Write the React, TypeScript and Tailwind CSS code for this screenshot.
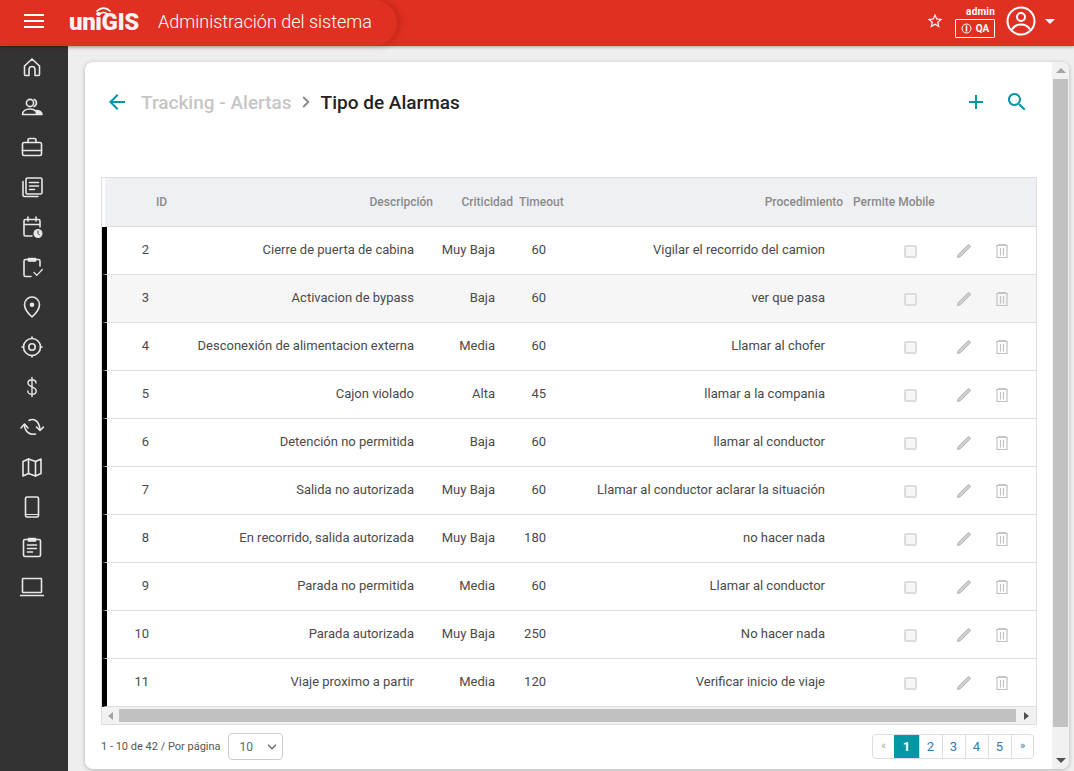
import { ChevronDown, ChevronRight } from 'lucide-react';
import type { ReactNode } from 'react';

const rows = [
    { id: 2, desc: 'Cierre de puerta de cabina', crit: 'Muy Baja', timeout: 60, proc: 'Vigilar el recorrido del camion' },
    { id: 3, desc: 'Activacion de bypass', crit: 'Baja', timeout: 60, proc: 'ver que pasa' },
    { id: 4, desc: 'Desconexión de alimentacion externa', crit: 'Media', timeout: 60, proc: 'Llamar al chofer' },
    { id: 5, desc: 'Cajon violado', crit: 'Alta', timeout: 45, proc: 'llamar a la compania' },
    { id: 6, desc: 'Detención no permitida', crit: 'Baja', timeout: 60, proc: 'llamar al conductor' },
    { id: 7, desc: 'Salida no autorizada', crit: 'Muy Baja', timeout: 60, proc: 'Llamar al conductor aclarar la situación' },
    { id: 8, desc: 'En recorrido, salida autorizada', crit: 'Muy Baja', timeout: 180, proc: 'no hacer nada' },
    { id: 9, desc: 'Parada no permitida', crit: 'Media', timeout: 60, proc: 'Llamar al conductor' },
    { id: 10, desc: 'Parada autorizada', crit: 'Muy Baja', timeout: 250, proc: 'No hacer nada' },
    { id: 11, desc: 'Viaje proximo a partir', crit: 'Media', timeout: 120, proc: 'Verificar inicio de viaje' },
];

// sidebar icons, drawn on a 24 box
const sideIcons: ReactNode[] = [
    <path key="home" d="M4.5 11 12 4l7.500 7v8.500a1 1 0 0 1-1 1H15v-6a3 3 0 0 0-6 0v6H5.500a1 1 0 0 1-1-1z" />,
    <g key="users">
        <circle cx="10" cy="8" r="3.600" />
        <path d="M14 4.600a3.600 3.600 0 0 1 0 6.800" />
        <path d="M2.500 19.500c0-3.500 3.500-5.500 7.500-5.500 2.500 0 4.500.8 6 2.200l1 3.300z" />
        <path d="M16.500 15.500c3 0 5.500 1.500 5.500 4h-4.500z" fill="#e8e8e8" />
    </g>,
    <g key="case">
        <rect x="2.500" y="7.500" width="19" height="13" rx="1.500" />
        <path d="M8 7.500V5a1.500 1.500 0 0 1 1.500-1.500h5A1.500 1.500 0 0 1 16 5v2.500M2.500 15.500h19" />
    </g>,
    <g key="news">
        <rect x="6" y="3" width="16" height="16" rx="1.500" />
        <path d="M3 6.500V20a1.500 1.500 0 0 0 1.500 1.500H18M9.500 7.500h9M9.500 11h9M9.500 14.500h5" />
    </g>,
    <g key="cal">
        <path d="M12 21H5.500A1.500 1.500 0 0 1 4 19.500V6a1.500 1.500 0 0 1 1.500-1.500h13A1.500 1.500 0 0 1 20 6v6M4 9.500h16M8 2v4M16 2v4" />
        <circle cx="18" cy="18.500" r="4.500" fill="#e8e8e8" stroke="none" />
        <path d="M18 16v2.500l1.500 1.500" stroke="#333333" strokeWidth="1" />
    </g>,
    <g key="check">
        <path d="M8 4.500H5.500A1.500 1.500 0 0 0 4 6v14a1.500 1.500 0 0 0 1.500 1.500H11M16 4.500h2.500A1.500 1.500 0 0 1 20 6v5" />
        <path d="M8.500 3.500h7v2.500h-7z" fill="#e8e8e8" />
        <path d="m14 17.500 2.800 2.800 5.500-5.800" strokeWidth="1.200" />
    </g>,
    <g key="pin">
        <path d="M12 22s7.500-6.800 7.500-12.500a7.500 7.500 0 0 0-15 0C4.500 15.200 12 22 12 22z" />
        <circle cx="12" cy="9.800" r="1.500" fill="#e8e8e8" />
    </g>,
    <g key="target">
        <circle cx="12" cy="12" r="8.500" />
        <circle cx="12" cy="12" r="3.200" />
        <path d="M12 2v1.500M12 20.500V22M2 12h1.500M20.500 12H22" />
    </g>,
    <path key="dollar" d="M16 8c0-2-1.800-3.300-4-3.300S8 6 8 8s1.800 3 4 3.800 4.200 1.700 4.200 4.200-2 3.300-4.200 3.300S7.800 18 7.800 16M12 2.500v19" strokeWidth="1.400" />,
    <g key="sync">
        <path d="M9 5.500C13 3 19 5 20 14.500" />
        <path d="m16.500 12 3.500 3.500 3.500-3.500" />
        <path d="M4.500 10c0 6 5 10.500 11 9" />
        <path d="M1 13 4.500 9 8 13" />
    </g>,
    <g key="map">
        <path d="M3 6.500 8.500 4l7 2.500L21 4v14.500L15.500 21l-7-2.500L3 21z" />
        <path d="M8.500 4v14.500M15.500 6.500V21" />
    </g>,
    <g key="phone">
        <rect x="5.500" y="2" width="13" height="20" rx="1.500" />
        <path d="M5.500 19.500h13" strokeWidth="1" />
    </g>,
    <g key="list">
        <rect x="3.500" y="4.500" width="17" height="17" rx="1.500" />
        <path d="M8.500 3.500h7V6h-7z" fill="#e8e8e8" />
        <path d="M7.500 10h9M7.500 13.500h9M7.500 17h5" />
    </g>,
    <g key="laptop">
        <rect x="2.500" y="3.500" width="19" height="14" rx="0.500" />
        <path d="M.5 20.500h23" />
    </g>,
];

function SideIcon({ children }: { children: ReactNode }) {
    return (
        <div className="h-10 flex items-center justify-center">
            <svg width="24" height="24" viewBox="0 0 24 24" fill="none" stroke="#e8e8e8" strokeWidth="1.600" strokeLinecap="round" strokeLinejoin="round">
                {children}
            </svg>
        </div>
    );
}

function Logo() {
    return (
        <div className="relative w-[71px] h-[26px] ml-[25px] flex items-end">
            <span className="font-['Roboto',sans-serif] font-black text-[24px] leading-[24px] tracking-[-0.4px] text-white/95">uniGIS</span>
            <svg className="absolute left-[25px] -top-[3px]" width="20" height="12" viewBox="0 0 20 12" fill="none" stroke="white" strokeWidth="1.700" strokeLinecap="round">
                <path d="M3 6a9 9 0 0 1 13 0" />
                <path d="M6 9a5 5 0 0 1 7 0" />
            </svg>
        </div>
    );
}

function TriangleUp({ color = '#a3a3a3' }: { color?: string }) {
    return <div className="w-0 h-0 border-x-[5px] border-x-transparent border-b-[5px]" style={{ borderBottomColor: color }} />;
}

function TriangleDown({ color = '#505050' }: { color?: string }) {
    return <div className="w-0 h-0 border-x-[5px] border-x-transparent border-t-[5px]" style={{ borderTopColor: color }} />;
}

function MaterialIcon({ d, size = 24 }: { d: string; size?: number }) {
    return (
        <svg width={size} height={size} viewBox="0 0 24 24" fill="currentColor" className="shrink-0">
            <path d={d} />
        </svg>
    );
}

function Pencil() {
    return (
        <svg width="16" height="16" viewBox="0 0 16 16" fill="none" stroke="#a9a9a9" strokeWidth="0.900">
            <path d="M1.500 14.500 2.300 11.500 12 1.800a.8.800 0 0 1 1.100 0l1.100 1.100a.8.800 0 0 1 0 1.100L4.500 13.700z" fill="#cfcfcf" />
        </svg>
    );
}

function Trash() {
    return (
        <svg width="14" height="14" viewBox="0 0 14 14" fill="none" stroke="#c2c2c2" strokeWidth="1.200">
            <path d="M1 1.500h12M3 .5h8M2 2v11.500h10V2M5.500 4v7.500M8.500 4v7.500" />
        </svg>
    );
}

function Row({ row, hover }: { row: (typeof rows)[number]; hover: boolean }) {
    return (
        <div className={`flex items-center h-12 border-l-[5px] border-l-black border-b border-b-[#dedede] text-[13px] text-[#4a4a4a] ${hover ? 'bg-[#f6f6f6]' : 'bg-white'}`}>
            <div className="w-[42px] text-right pb-px">{row.id}</div>
            <div className="w-[265px] text-right pb-px whitespace-nowrap">{row.desc}</div>
            <div className="w-[81px] text-right pb-px">{row.crit}</div>
            <div className="w-[51px] text-right pb-px">{row.timeout}</div>
            <div className="w-[279px] text-right pb-px whitespace-nowrap">{row.proc}</div>
            <div className="w-[13px] h-[13px] ml-[79px] mt-px rounded-[2px] border-2 border-[#dcdcdc] bg-[#f6f6f6]" />
            <div className="ml-[39px]"><Pencil /></div>
            <div className="ml-[23px]"><Trash /></div>
        </div>
    );
}

export default function App() {
    const pages = ['1', '2', '3', '4', '5'];

    return (
        <div className="h-[771px] flex flex-col overflow-hidden bg-[#eeeeee] font-['Roboto',sans-serif]">
            {/* Header */}
            <header className="relative z-10 h-[46px] shrink-0 bg-[#e03022] flex items-center shadow-[0_1px_3px_rgba(0,0,0,0.3)]">
                <div className="h-[46px] w-[397px] flex items-center rounded-r-[24px] shadow-[4px_0_6px_rgba(120,20,10,0.25)] pl-[24px] pb-[4px]">
                    <div className="w-[20px] flex flex-col gap-[4px]">
                        <div className="h-[2px] bg-white" />
                        <div className="h-[2px] bg-white" />
                        <div className="h-[2px] bg-white" />
                    </div>
                    <Logo />
                    <span className="ml-[18px] text-[18px] font-light text-white whitespace-nowrap">Administración del sistema</span>
                </div>
                <div className="ml-auto flex items-center pr-[19px] pb-[4px] text-white">
                    <MaterialIcon size={18} d="M22 9.240l-7.190-.620L12 2 9.190 8.630 2 9.240l5.460 4.730L5.820 21 12 17.270 18.180 21l-1.630-7.030L22 9.240zM12 15.400l-3.760 2.270 1-4.280-3.320-2.880 4.380-.380L12 6.100l1.710 4.040 4.380.380-3.320 2.880 1 4.280L12 15.400z" />
                    <div className="ml-[11px] w-[40px] flex flex-col items-end">
                        <span className="text-[10px] font-bold leading-[11px] mb-[2px] tracking-[0.2px] pt-[1px]">admin</span>
                        <div className="w-[40px] h-[19px] border border-white rounded-[1px] flex items-center justify-center gap-[4px] text-[10px] font-bold">
                            <svg width="11" height="11" viewBox="0 0 11 11" fill="none" stroke="white" strokeWidth="1">
                                <circle cx="5.500" cy="5.500" r="4.500" />
                                <path d="M5.500 2.500v6" strokeWidth="1.500" />
                            </svg>
                            QA
                        </div>
                    </div>
                    <svg className="ml-[11px]" width="30" height="30" viewBox="0 0 30 30" fill="none" stroke="white" strokeWidth="2">
                        <circle cx="15" cy="15" r="13.500" />
                        <circle cx="15" cy="11" r="4" />
                        <path d="M6 23.500c2-3.500 5.500-5 9-5s7 1.500 9 5" />
                    </svg>
                    <div className="ml-[9px] w-0 h-0 border-x-[5px] border-x-transparent border-t-[5px] border-t-white" />
                </div>
            </header>

            <div className="flex-1 flex min-h-0">
                {/* Sidebar */}
                <nav className="w-[68px] shrink-0 bg-[#333333] pt-px pr-[4px]">
                    {sideIcons.map((icon, i) => (
                        <SideIcon key={i}>{icon}</SideIcon>
                    ))}
                </nav>

                <main className="flex-1 min-w-0 pt-[16px] pl-[17px] pr-[5px] pb-[2px]">
                    <div className="h-full flex bg-white rounded-[8px] shadow-[0_1px_4px_rgba(0,0,0,0.25)] overflow-hidden">
                        <div className="w-[967px] pl-[16px] pr-[15px]">
                            {/* Title */}
                            <div className="h-[80px] mb-[35px] flex items-center">
                                <div className="text-[#0097a7] ml-[4px]">
                                    <MaterialIcon d="M20 11H7.830l5.590-5.590L12 4l-8 8 8 8 1.410-1.410L7.830 13H20v-2z" />
                                </div>
                                <span className="ml-[12px] mt-[2px] text-[19px] font-medium text-[#c6c6c6] whitespace-nowrap">Tracking - Alertas</span>
                                <ChevronRight size={18} strokeWidth={2.500} className="text-[#8a8a8a] ml-[5px]" />
                                <span className="ml-[6px] mt-[2px] text-[19px] font-medium text-[#222222] whitespace-nowrap">Tipo de Alarmas</span>
                                <div className="text-[#0097a7] ml-auto">
                                    <MaterialIcon d="M19 13h-6v6h-2v-6H5v-2h6V5h2v6h6v2z" />
                                </div>
                                <div className="text-[#0097a7] ml-[17px] mr-[8px]">
                                    <MaterialIcon d="M15.500 14h-.790l-.280-.270C15.410 12.590 16 11.110 16 9.500 16 5.910 13.090 3 9.500 3S3 5.910 3 9.500 5.910 16 9.500 16c1.610 0 3.090-.590 4.230-1.570l.270.280v.790l5 4.990L20.490 19l-4.990-5zm-6 0C7.010 14 5 11.990 5 9.500S7.010 5 9.500 5 14 7.010 14 9.500 11.990 14 9.500 14z" />
                                </div>
                            </div>

                            {/* Table */}
                            <div className="border border-[#dedede]">
                                <div className="flex items-center h-[49px] ml-[3px] bg-[#eff0f4] border-b border-b-[#dedede] text-[12px] font-medium text-[#8a8a8a] whitespace-nowrap">
                                    <div className="w-[113px] text-center">ID</div>
                                    <div className="w-[215px] text-right">Descripción</div>
                                    <div className="w-[80px] text-right">Criticidad</div>
                                    <div className="ml-[6px] w-[45px]">Timeout</div>
                                    <div className="w-[279px] text-right">Procedimiento</div>
                                    <div className="ml-[10px]">Permite Mobile</div>
                                </div>
                                {rows.map(row => (
                                    <Row key={row.id} row={row} hover={row.id === 3} />
                                ))}
                                {/* Horizontal scrollbar */}
                                <div className="h-[17px] bg-[#f1f1f1] flex items-center">
                                    <div className="w-[17px] flex justify-center">
                                        <div className="w-0 h-0 border-y-[4px] border-y-transparent border-r-[5px] border-r-[#a3a3a3]" />
                                    </div>
                                    <div className="w-[897px] h-[13px] bg-[#c1c1c1]" />
                                    <div className="flex-1 flex justify-center">
                                        <div className="w-0 h-0 border-y-[4px] border-y-transparent border-l-[5px] border-l-[#505050]" />
                                    </div>
                                </div>
                            </div>

                            {/* Footer */}
                            <div className="mt-[8px] flex items-start">
                                <span className="mt-[6px] text-[11px] text-[#555555] whitespace-nowrap">1 - 10 de 42 / Por página</span>
                                <div className="ml-[7px] w-[55px] h-[27px] pt-px rounded-[4px] border border-[#cccccc] flex items-center justify-between pl-[11px] pr-[3px] text-[12px] text-[#666666]">
                                    10
                                    <ChevronDown size={14} strokeWidth={3} className="text-[#777777]" />
                                </div>
                                <div className="ml-auto mr-[3px] mt-px h-[25px] flex rounded-[4px] border border-[#dddddd] text-[13px] text-[#337ab7] overflow-hidden">
                                    <div className="w-[21px] flex items-center justify-center text-[11px] text-[#c0a890]">«</div>
                                    {pages.map(page => (
                                        <div
                                            key={page}
                                            className={page === '1'
                                                ? 'w-[25px] flex items-center justify-center bg-[#0097a7] text-white font-bold'
                                                : 'w-[23px] pr-px flex items-center justify-center border-l border-l-[#dddddd]'}
                                        >
                                            {page}
                                        </div>
                                    ))}
                                    <div className="w-[22px] flex items-center justify-center border-l border-l-[#dddddd] text-[11px]">»</div>
                                </div>
                            </div>
                        </div>

                        {/* Page scrollbar */}
                        <div className="w-[17px] bg-[#f1f1f1] flex flex-col items-center">
                            <div className="h-[17px] flex items-center justify-center shrink-0"><TriangleUp /></div>
                            <div className="w-[15px] h-[648px] bg-[#c1c1c1]" />
                            <div className="mt-auto h-[17px] flex items-center justify-center"><TriangleDown /></div>
                        </div>
                    </div>
                </main>
            </div>
        </div>
    );
}
